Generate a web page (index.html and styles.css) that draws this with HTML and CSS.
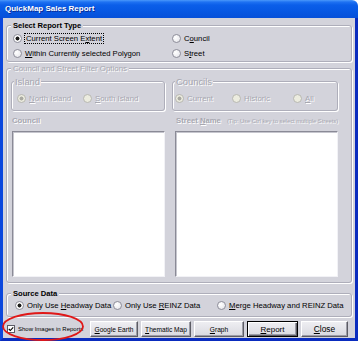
FILE: index.html
```html
<!DOCTYPE html>
<html lang="en">
<head>
    <meta charset="UTF-8">
    <title>QuickMap Sales Report</title>
    <link rel="stylesheet" href="styles.css">
</head>
<body>
<div class="window">
    <div class="titlebar">QuickMap Sales Report</div>
    <div class="frame">

        <fieldset class="group">
            <legend>Select Report Type</legend>
            <div class="type-grid">
                <label class="opt"><input type="radio" name="rt" checked><span class="focus">Current Screen E<u>x</u>tent</span></label>
                <label class="opt"><input type="radio" name="rt"><span>C<u>o</u>uncil</span></label>
                <label class="opt"><input type="radio" name="rt"><span><u>W</u>ithin Currently selected Polygon</span></label>
                <label class="opt"><input type="radio" name="rt"><span>S<u>t</u>reet</span></label>
            </div>
        </fieldset>

        <fieldset class="group filter off" disabled>
            <legend>Council and Street Filter Options</legend>
            <div class="filter-body">
                <div class="sub-row">
                    <fieldset class="subgroup island">
                        <legend>Island</legend>
                        <div class="sub-opts">
                            <label class="opt w66"><input type="radio" name="isl" checked><span><u>N</u>orth Island</span></label>
                            <label class="opt"><input type="radio" name="isl"><span><u>S</u>outh Island</span></label>
                        </div>
                    </fieldset>
                    <fieldset class="subgroup councils">
                        <legend>Councils</legend>
                        <div class="sub-opts">
                            <label class="opt w57"><input type="radio" name="cn" checked><span>Current</span></label>
                            <label class="opt w61"><input type="radio" name="cn"><span>Historic</span></label>
                            <label class="opt"><input type="radio" name="cn"><span><u>A</u>ll</span></label>
                        </div>
                    </fieldset>
                </div>
                <div class="label-row">
                    <span class="council-lbl">Council</span>
                    <span class="street-lbl">Street <u>N</u>ame<span class="tip">(Tip: Use Ctrl key to select multiple Streets)</span></span>
                </div>
                <div class="list-row">
                    <div class="list council-list"></div>
                    <div class="list street-list"></div>
                </div>
            </div>
        </fieldset>

        <fieldset class="group source">
            <legend>Source Data</legend>
            <div class="source-opts">
                <label class="opt w98"><input type="radio" name="src" checked><span>Only Use <u>H</u>eadway Data</span></label>
                <label class="opt w104"><input type="radio" name="src"><span>Only Use <u>R</u>EINZ Data</span></label>
                <label class="opt"><input type="radio" name="src"><span><u>M</u>erge Headway and REINZ Data</span></label>
            </div>
        </fieldset>

        <div class="actions">
            <label class="show-images">
                <span class="check"><svg width="6" height="6" viewBox="0 0 6 6"><path d="M0.8 3 L2.3 4.5 L5.2 1.3" stroke="#000" stroke-width="1.1" fill="none"/></svg></span>
                <span>Show Images in Reports</span>
            </label>
            <button class="btn b-earth"><u>G</u>oogle Earth</button>
            <button class="btn b-theme"><u>T</u>hematic Map</button>
            <button class="btn b-graph"><u>G</u>raph</button>
            <button class="btn b-report"><u>R</u>eport</button>
            <button class="btn b-close"><u>C</u>lose</button>
        </div>
    </div>

    <svg class="mark" width="358" height="341">
        <ellipse cx="43" cy="326.5" rx="40" ry="13.5" fill="none" stroke="#e01818" stroke-width="1.8"/>
    </svg>
</div>
</body>
</html>
```

FILE: styles.css
```css
* {
    box-sizing: border-box;
}
body {
    margin: 0;
    background-color: #ffffff;
    font-family: "Liberation Sans", Arial, sans-serif;
    font-size: 7.7px;
    color: #000;
}
.window {
    position: relative;
    width: 358px;
    height: 341px;
    display: flex;
    flex-direction: column;
}
.titlebar {
    flex: none;
    height: 18px;
    line-height: 18px;
    padding-left: 5px;
    color: #fff;
    font-size: 8px;
    font-weight: bold;
    text-shadow: 1px 1px 0 #0a2c94;
    border-top-right-radius: 6px;
    background: linear-gradient(#4a98fb 0, #1f72f2 2px, #0b5ee9 5px, #0758e3 60%, #0650d9 100%);
}
.frame {
    flex: 1;
    background-color: #d3d3db;
    border: 3px solid #0b47dd;
    border-top: 0;
    border-right-color: #0a2cbe;
    border-bottom-color: #0a2cbe;
    padding: 3px 3px 1px;
}

/* group boxes */
.group {
    margin: 0;
    padding: 0;
    min-width: 0;
    border: 1px solid #aeaeba;
    border-radius: 3px;
    box-shadow: 1px 1px 0 #fff, inset 1px 1px 0 #fff;
}
.group legend {
    margin-left: 4px;
    padding: 0 2px;
    line-height: 9px;
    font-size: 7.6px;
    font-weight: bold;
    background-color: #d3d3db;
}
.opt {
    display: flex;
    align-items: center;
    white-space: nowrap;
}
input[type=radio] {
    appearance: none;
    flex: none;
    margin: 0 3px 0 0;
    width: 9px;
    height: 9px;
    border-radius: 50%;
    border: 1px solid #8e8e9a;
    background: radial-gradient(circle at 35% 35%, #fff, #e2e2e8);
}
input[type=radio]:checked {
    background: radial-gradient(circle, #1c1c1c 0 1.7px, #fff 2.3px);
}
input[type=radio]:disabled {
    border-color: #b8b8b2;
    background: #ececdf;
}
input[type=radio]:disabled:checked {
    background: radial-gradient(circle, #a9a9a2 0 1.7px, #ececdf 2.3px);
}
.focus {
    outline: 1px dotted #000;
    padding: 0 1px;
}
.type-grid {
    display: grid;
    grid-template-columns: 159px 1fr;
    grid-auto-rows: 15px;
    padding: 1px 0 0 6px;
}

/* disabled filter block */
.filter {
    margin-top: 2px;
}
.filter legend {
    font-size: 7.9px;
    font-weight: normal;
}
.off legend,
.off .opt,
.label-row {
    color: #a7a7b0;
    text-shadow: 1px 1px 0 #fff;
}
.filter-body {
    padding: 3px 4px 5px;
}
.sub-row {
    display: flex;
    gap: 7px;
}
.subgroup {
    margin: 0;
    padding: 0;
    min-width: 0;
    border: 1px solid #aeaeba;
    border-radius: 3px;
    box-shadow: 1px 1px 0 #fff, inset 1px 1px 0 #fff;
}
.subgroup legend {
    margin-left: 2px;
    padding: 0 1px;
    font-size: 9.4px;
    line-height: 11px;
    font-weight: normal;
    background-color: #d3d3db;
}
.island {
    width: 154px;
}
.councils {
    width: 166px;
}
.sub-opts {
    display: flex;
    height: 23px;
    padding: 4px 0 5px 5px;
}
.sub-opts .opt {
    font-size: 7.8px;
}
.councils .sub-opts {
    padding-left: 2px;
}
.w57 { width: 57px; }
.w61 { width: 61px; }
.w66 { width: 66px; }
.w98 { width: 98px; }
.w104 { width: 104px; }

.label-row {
    display: flex;
    margin-top: 5px;
    height: 10px;
    line-height: 10px;
    font-weight: bold;
    white-space: nowrap;
}
.council-lbl {
    margin-left: 1px;
    width: 164px;
}
.tip {
    margin-left: 6px;
    font-size: 5.8px;
    font-weight: normal;
}
.list-row {
    display: flex;
    margin-top: 5px;
    height: 146px;
}
.list {
    background-color: #fff;
    border: 1px solid;
    border-color: #8a8a96 #f2f2f6 #f2f2f6 #8a8a96;
    box-shadow: inset 1px 1px 0 #c6c6ce;
}
.council-list {
    margin-left: 1px;
    width: 153px;
}
.street-list {
    margin-left: 10px;
    width: 163px;
}

/* source data */
.source {
    margin-top: 6px;
}
.source-opts {
    display: flex;
    height: 14px;
    padding-left: 8px;
    margin-bottom: 4px;
}

/* bottom buttons */
.actions {
    display: flex;
    align-items: center;
    height: 16px;
    margin-top: 4px;
}
.show-images {
    display: flex;
    align-items: center;
    width: 84px;
    padding-left: 1px;
    font-size: 6px;
    white-space: nowrap;
}
.check {
    display: flex;
    align-items: center;
    justify-content: center;
    width: 8px;
    height: 8px;
    margin-right: 3px;
    border: 1px solid #5c5c66;
    background-color: #fff;
}
.btn {
    height: 16px;
    margin: 0 3px 0 0;
    padding: 0;
    font-family: inherit;
    font-size: 6.6px;
    color: #000;
    background: linear-gradient(#eeeef2, #d9d9e0);
    border: 1px solid;
    border-color: #fff #5c5c64 #5c5c64 #fff;
    box-shadow: inset -1px -1px 0 #9c9ca6;
}
.b-earth { width: 48px; }
.b-theme { width: 50px; }
.b-graph { width: 50px; }
.b-report {
    width: 51px;
    font-size: 8px;
    border: 1px solid #000;
    box-shadow: inset 1px 1px 0 #fff, inset -1px -1px 0 #5c5c64, inset -2px -2px 0 #9c9ca6;
}
.b-close {
    width: 47px;
    margin-right: 0;
    font-size: 8.4px;
}

.mark {
    position: absolute;
    left: 0;
    top: 0;
    pointer-events: none;
}
```
